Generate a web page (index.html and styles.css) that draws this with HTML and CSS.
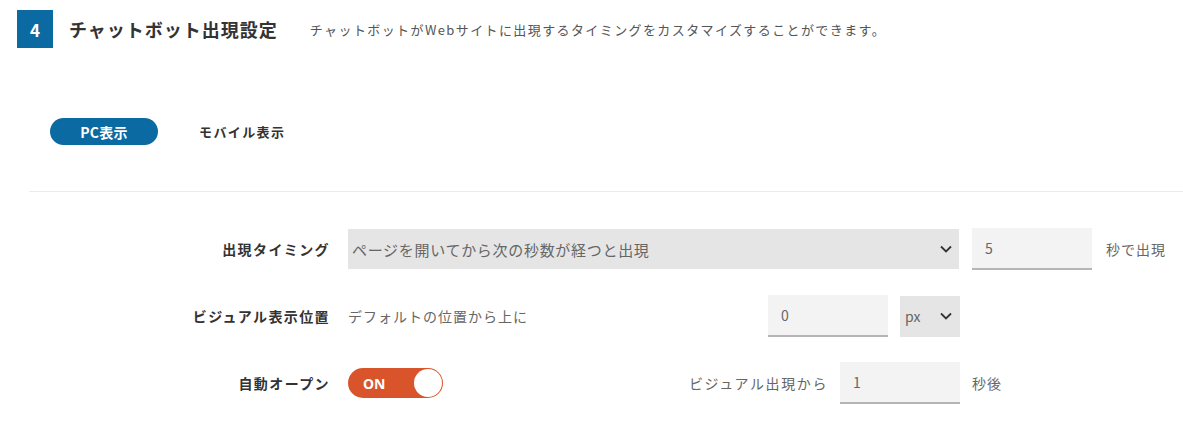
FILE: index.html
```html
<!DOCTYPE html>
<html lang="ja">
<head>
  <meta charset="UTF-8">
  <meta name="viewport" content="width=device-width, initial-scale=1">
  <title>チャットボット出現設定</title>
  <link rel="stylesheet" href="styles.css">
</head>
<body>

<div class="section-head">
  <div class="step-badge">4</div>
  <h2 class="section-title">チャットボット出現設定</h2>
  <p class="section-desc">チャットボットがWebサイトに出現するタイミングをカスタマイズすることができます。</p>
</div>

<div class="tabs">
  <span class="tab active">PC表示</span>
  <span class="tab">モバイル表示</span>
</div>

<hr class="divider">

<div class="form">

  <div class="row">
    <label class="label">出現タイミング</label>
    <div class="field">
      <div class="select wide">
        <span>ページを開いてから次の秒数が経つと出現</span>
        <svg width="12" height="8" viewBox="0 0 12 8"><path d="M1 1.5l5 5 5-5" fill="none" stroke="#333" stroke-width="1.8"/></svg>
      </div>
    </div>
    <div class="trail">
      <input class="num" type="text" value="5">
      <span class="unit">秒で出現</span>
    </div>
  </div>

  <div class="row">
    <label class="label">ビジュアル表示位置</label>
    <div class="field">
      <span class="plain">デフォルトの位置から上に</span>
      <div class="group">
        <input class="num" type="text" value="0">
        <div class="select small">
          <span>px</span>
          <svg width="12" height="8" viewBox="0 0 12 8"><path d="M1 1.5l5 5 5-5" fill="none" stroke="#333" stroke-width="1.8"/></svg>
        </div>
      </div>
    </div>
  </div>

  <div class="row">
    <label class="label">自動オープン</label>
    <div class="field">
      <div class="toggle on">
        <span class="toggle-text">ON</span>
        <span class="knob"></span>
      </div>
      <div class="group">
        <span class="plain spaced">ビジュアル出現から</span>
        <input class="num" type="text" value="1">
      </div>
    </div>
    <div class="trail">
      <span class="unit">秒後</span>
    </div>
  </div>

</div>

</body>
</html>
```

FILE: styles.css
```css
body {
  margin: 0;
  font-family: "Noto Sans CJK JP", "Noto Sans", sans-serif;
  background-color: #ffffff;
  color: #333;
}
.section-head {
  display: flex;
  align-items: center;
  padding: 10px 0 0 17px;
}
.step-badge {
  width: 36px;
  height: 38px;
  background: #0b6aa2;
  color: white;
  font-weight: 700;
  font-size: 17px;
  display: flex;
  align-items: center;
  justify-content: center;
}
.section-title {
  margin: 0 0 0 16px;
  font-size: 18px;
  font-weight: 700;
  letter-spacing: 1px;
  color: #333;
}
.section-desc {
  margin: 0 0 0 32px;
  font-size: 13px;
  letter-spacing: 1.4px;
  color: #555;
}
.tabs {
  display: flex;
  align-items: center;
  gap: 41px;
  padding-left: 50px;
  margin-top: 70px;
}
.tab {
  font-size: 13px;
  font-weight: 700;
  letter-spacing: 1.4px;
  color: #333;
}
.tab.active {
  width: 108px;
  height: 27px;
  border-radius: 14px;
  background: #0b6aa2;
  color: white;
  display: flex;
  align-items: center;
  justify-content: center;
  font-size: 14px;
  letter-spacing: 0.3px;
}
.divider {
  border: none;
  border-top: 1px solid #ebebeb;
  margin: 46px 0 0 29px;
}
.form {
  display: flex;
  flex-direction: column;
  gap: 25px;
  margin-top: 36px;
}
.row {
  display: grid;
  grid-template-columns: 330px 630px 1fr;
  align-items: center;
  height: 42px;
}
.label {
  text-align: right;
  font-size: 14px;
  font-weight: 700;
  letter-spacing: 1.4px;
  color: #333;
}
.field {
  margin-left: 18px;
  display: flex;
  align-items: center;
  justify-content: space-between;
  height: 100%;
}
.trail {
  display: flex;
  align-items: center;
  gap: 14px;
  padding-left: 12px;
}
.group {
  display: flex;
  align-items: center;
  gap: 12px;
}
.plain, .unit {
  font-size: 14px;
  letter-spacing: 1px;
  color: #666;
}
.plain.spaced {
  letter-spacing: 1.6px;
}
.select {
  background: #e5e5e5;
  display: flex;
  align-items: center;
  justify-content: space-between;
  box-sizing: border-box;
  color: #666;
}
.select.wide {
  width: 611px;
  height: 40px;
  padding: 0 7px 0 4px;
  font-size: 15px;
  letter-spacing: 0.7px;
}
.select.small {
  width: 60px;
  height: 41px;
  padding: 0 8px 0 5px;
  font-size: 14px;
}
.num {
  width: 120px;
  height: 42px;
  box-sizing: border-box;
  border: none;
  border-bottom: 2px solid #b5b5b5;
  background: #f3f3f3;
  padding: 0 13px;
  font-family: inherit;
  font-size: 14px;
  color: #666;
  outline: none;
}
.toggle {
  width: 95px;
  height: 30px;
  box-sizing: border-box;
  border-radius: 15px;
  background: #d9542b;
  display: flex;
  align-items: center;
  justify-content: space-between;
  padding: 0 1px 0 15px;
}
.toggle-text {
  color: white;
  font-weight: 700;
  font-size: 14px;
  font-family: "Noto Sans", sans-serif;
}
.knob {
  width: 28px;
  height: 28px;
  border-radius: 50%;
  background: white;
}
```
